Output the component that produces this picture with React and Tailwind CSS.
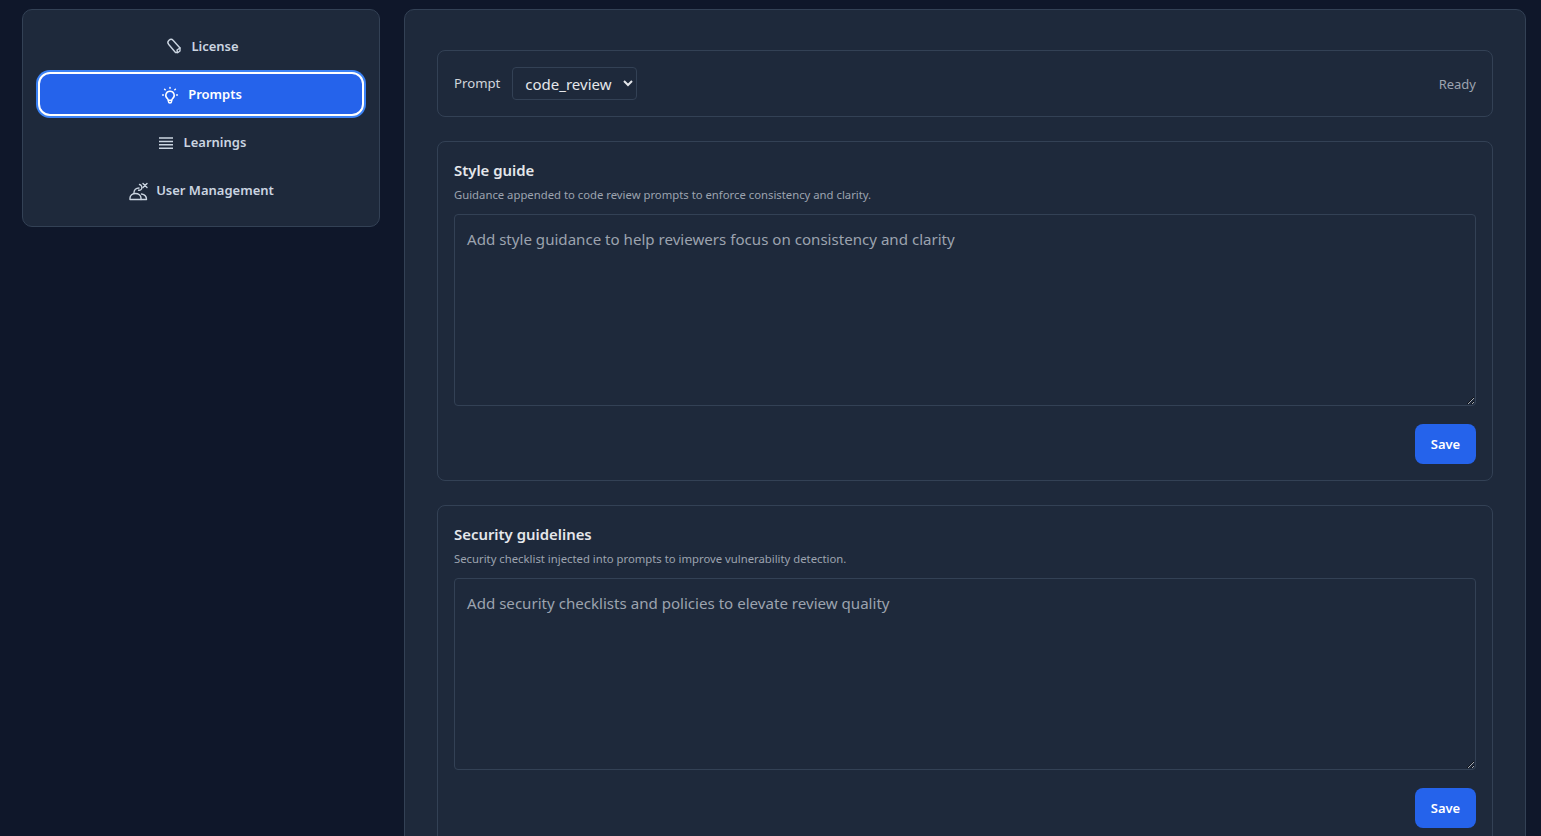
import React from "react";

function LicenseIcon() {
  return (
    <svg width="20" height="20" viewBox="0 0 20 20" fill="none" stroke="currentColor" strokeWidth="1.4" strokeLinejoin="round" strokeLinecap="round">
      <path d="M10.250 3.500L17 11v3l-2 1.500h-2.500L5.750 7.500A3 3 0 0 1 10.250 3.500z" />
      <path d="M14.500 15.500L14 13l3-2" />
    </svg>
  );
}

function BulbIcon() {
  return (
    <svg width="20" height="20" viewBox="0 0 20 20" fill="none" stroke="currentColor" strokeWidth="1.5" strokeLinecap="round">
      <path d="M10 6.200a4.200 4.200 0 0 0-2.600 7.500c.5.4.8 1 .8 1.500h3.600c0-.5.3-1.100.8-1.500A4.200 4.200 0 0 0 10 6.200z" />
      <path d="M8.400 16.400c.2 2 3 2 3.200 0" />
      <path d="M10 2.400v.8M4.600 4.200l.6.6M15.400 4.200l-.6.6M2.600 10h.8M16.600 10h.8" />
    </svg>
  );
}

function LinesIcon() {
  return (
    <svg width="20" height="20" viewBox="0 0 20 20" fill="none" stroke="currentColor" strokeWidth="1.5">
      <path d="M3 5h14M3 8.400h14M3 11.800h14M3 15.200h14" />
    </svg>
  );
}

function UsersIcon() {
  return (
    <svg width="20" height="20" viewBox="0 0 20 20" fill="none" stroke="currentColor" strokeWidth="1.4" strokeLinecap="round" strokeLinejoin="round">
      <path d="M2 18.500V17c0-2.500 2.500-4.500 5.500-4.500S13 14.500 13 17v1.500H2z" />
      <path d="M13 18.500h5.500c0-2.500-1.500-5-5-5.500" />
      <path d="M6 11.500c0-2.500 2-4.500 5-4.500" />
      <path d="M11.500 3.500c2 .5 3 2.500 2 4.500-.6 1-2 1.400-3 1.200" />
      <path d="M15 6.500l4-4M15 2.500l4 4" />
    </svg>
  );
}

function NavItem({ icon, label, active }) {
  return (
    <button
      className={
        active
          ? "h-11 pt-0.5 flex items-center justify-center gap-2 rounded-xl bg-[#2563eb] text-white text-[13px] font-semibold border-2 border-white ring-2 ring-[#3b82f6]"
          : "h-11 pt-0.5 flex items-center justify-center gap-2 rounded-xl text-[#cbd5e1] text-[13px] font-semibold"
      }
    >
      {icon}
      {label}
    </button>
  );
}

function GuideCard({ title, hint, placeholder }) {
  return (
    <section className="border border-[#334155] rounded-lg px-4 pt-[17px] pb-4">
      <h3 className="text-[14.9px] leading-[22px] font-semibold text-[#e5e7eb]">{title}</h3>
      <p className="text-[11.3px] leading-4 mt-[6px] text-[#9ca3af]">{hint}</p>
      <textarea
        className="mt-[11px] block w-full h-[192px] bg-transparent border border-[#334155] rounded px-3 py-3 text-[15.1px] leading-[24px] text-[#e5e7eb] placeholder:text-[#9ca3af] outline-none"
        placeholder={placeholder}
      />
      <div className="flex justify-end mt-[18px]">
        <button className="h-10 pt-0.5 w-[61px] rounded-lg bg-[#2563eb] text-white text-[13px] font-semibold">Save</button>
      </div>
    </section>
  );
}

export default function App() {
  return (
    <div className="h-screen overflow-hidden bg-[#0f172a] font-['Noto_Sans',sans-serif] flex items-start gap-6 pl-[22px] pr-[15px] pt-[9px]">
      <aside className="w-[358px] shrink-0 bg-[#1e293b] border border-[#334155] rounded-[10px] px-[15px] pt-[14px] pb-[14px] flex flex-col gap-1">
        <NavItem icon={<LicenseIcon />} label="License" />
        <NavItem icon={<BulbIcon />} label="Prompts" active />
        <NavItem icon={<LinesIcon />} label="Learnings" />
        <NavItem icon={<UsersIcon />} label="User Management" />
      </aside>

      <main className="flex-1 bg-[#1e293b] border border-[#334155] rounded-[10px] px-8 pt-10 pb-8 flex flex-col gap-6">
        <div className="h-[67px] border border-[#334155] rounded-lg px-4 flex items-center gap-3">
          <span className="text-[13.2px] text-[#d1d5db]">Prompt</span>
          <select className="h-[33px] w-[125px] bg-[#1e293b] border border-[#334155] rounded pl-2 text-[15px] text-[#e5e7eb] outline-none">
            <option>code_review</option>
          </select>
          <span className="ml-auto pt-0.5 text-[13px] text-[#9ca3af]">Ready</span>
        </div>

        <GuideCard
          title="Style guide"
          hint="Guidance appended to code review prompts to enforce consistency and clarity."
          placeholder="Add style guidance to help reviewers focus on consistency and clarity"
        />
        <GuideCard
          title="Security guidelines"
          hint="Security checklist injected into prompts to improve vulnerability detection."
          placeholder="Add security checklists and policies to elevate review quality"
        />
      </main>
    </div>
  );
}
